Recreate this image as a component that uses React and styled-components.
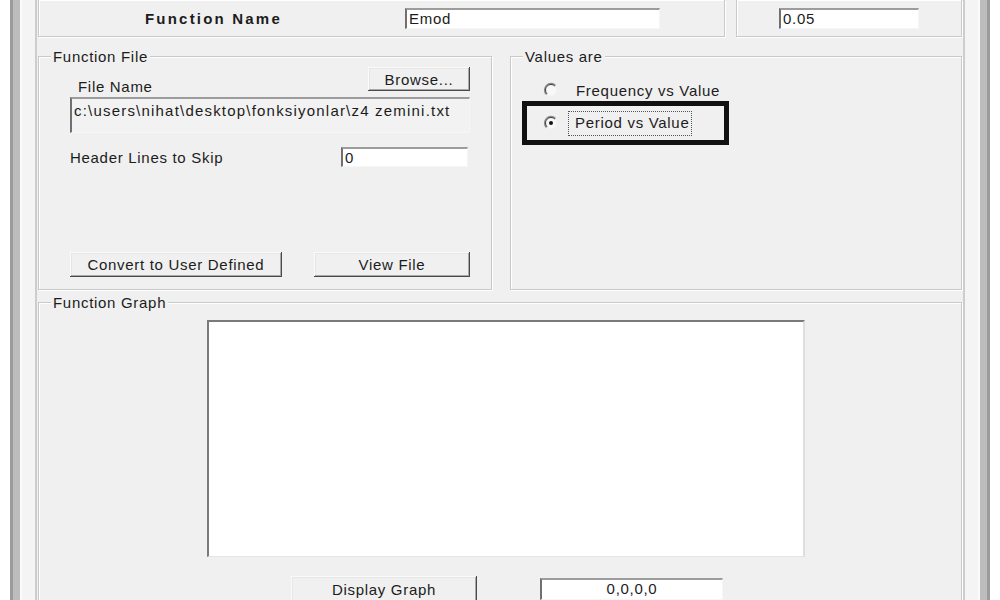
import React from "react";
import styled, { createGlobalStyle } from "styled-components";

const GlobalStyle = createGlobalStyle`
  html, body {
    margin: 0;
    padding: 0;
    background: #fff;
  }
  body {
    font-family: "Liberation Sans", Arial, sans-serif;
    font-size: 15px;
    letter-spacing: 0.7px;
    color: #1c1c1c;
  }
  * {
    box-sizing: border-box;
  }
`;

// window chrome: dark outer edge, grey rim, light inner strip
const Frame = styled.div`
  height: 600px;
  margin: 0 10px;
  border-left: 3px solid #9b9b9b;
  border-right: 3px solid #9b9b9b;
  overflow: hidden;
`;

const Rim = styled.div`
  height: 100%;
  border-left: 7px solid #bdbdbd;
  border-right: 7px solid #bdbdbd;
  background: #f4f4f4;
  box-shadow: inset 2px 0 #fbfbfb, inset -2px 0 #fbfbfb;
  padding: 0 15px;
`;

const Client = styled.div`
  height: 100%;
  border-left: 2px solid #cdcdcd;
  border-right: 2px solid #cdcdcd;
  padding: 0 1px;
  background: #f0f0f0;
  display: flex;
  flex-direction: column;
`;

const Group = styled.div`
  position: relative;
  border: 1px solid #c9c9c9;
  box-shadow: inset 1px 1px #fff, 1px 1px #fff;
  border-top: ${(p) => (p.$open ? "none" : "1px solid #c9c9c9")};
`;

const GroupTitle = styled.span`
  position: absolute;
  top: -9px;
  left: 12px;
  padding: 0 2px;
  line-height: 17px;
  background: #f0f0f0;
  white-space: nowrap;
`;

const TopRow = styled.div`
  display: flex;
  gap: 11px;
  height: 37px;
  flex-shrink: 0;
`;

const NameBox = styled(Group)`
  width: 687px;
  display: flex;
  align-items: center;
  padding-left: 106px;
`;

const DampBox = styled(Group)`
  flex: 1;
  display: flex;
  align-items: center;
  padding-left: 42px;
`;

const BoldLabel = styled.span`
  width: 260px;
  font-weight: 700;
  letter-spacing: 2.2px;
`;

const Field = styled.div`
  width: ${(p) => p.$w}px;
  height: ${(p) => p.$h || 21}px;
  background: ${(p) => (p.$flat ? "#f2f2f2" : "#fff")};
  border-top: 2px solid #9c9c9c;
  border-left: 2px solid #707070;
  border-right: 1px solid #f6f6f6;
  border-bottom: 1px solid #f6f6f6;
  padding: ${(p) => (p.$flat ? "3px 2px" : "0 2px")};
  line-height: ${(p) => (p.$flat ? "17px" : "18px")};
  text-align: ${(p) => (p.$center ? "center" : "left")};
  white-space: nowrap;
  overflow: hidden;
`;

const Button = styled.button`
  width: ${(p) => p.$w}px;
  height: ${(p) => p.$h || 25}px;
  padding: 0;
  border: none;
  background: #f0f0f0;
  font: inherit;
  letter-spacing: inherit;
  color: inherit;
  box-shadow: inset -1px -1px #4a4a4a, inset 1px 1px #fafafa,
    inset -2px -2px #a9a9a9, inset 2px 2px #e6e6e6;
`;

const MidRow = styled.div`
  display: flex;
  gap: 18px;
  height: 234px;
  margin-top: 19px;
  flex-shrink: 0;
`;

const FileGroup = styled(Group)`
  width: 454px;
  display: flex;
  flex-direction: column;
  padding: 10px 21px 12px 31px;
`;

const BrowseRow = styled.div`
  display: flex;
  justify-content: space-between;
  height: 24px;
`;

const Label = styled.span`
  line-height: 17px;
  margin-top: ${(p) => p.$top || 0}px;
  margin-left: ${(p) => p.$left || 0}px;
  width: ${(p) => (p.$w ? `${p.$w}px` : "auto")};
  white-space: nowrap;
`;

const PathBox = styled(Field)`
  margin-top: 6px;
  letter-spacing: 1.2px;
`;

const SkipRow = styled.div`
  display: flex;
  align-items: center;
  margin-top: 14px;
`;

const ButtonRow = styled.div`
  display: flex;
  gap: 32px;
  margin-top: auto;
`;

const ValuesGroup = styled(Group)`
  flex: 1;
  padding-top: 23px;
`;

const RadioRow = styled.div`
  display: flex;
  align-items: center;
  height: 20px;
  margin-left: 32px;
  gap: 17px;
`;

const Highlight = styled.div`
  width: 207px;
  height: 44px;
  margin: 1px 0 0 11px;
  border: 5px solid #111;
  display: flex;
  align-items: center;
  gap: 9px;
  padding-left: 16px;
`;

const Focus = styled.span`
  height: 25px;
  line-height: 22px;
  padding: 0 2px 0 6px;
  border: 1px dotted #555;
`;

const GraphGroup = styled(Group)`
  flex: 1;
  margin-top: 12px;
  border-bottom: none;
  padding: 17px 0 0 168px;
`;

const GraphArea = styled.div`
  width: 598px;
  height: 237px;
  background: #fff;
  border-top: 2px solid #7a7a7a;
  border-left: 2px solid #7a7a7a;
  border-right: 2px solid #dedede;
  border-bottom: 1px solid #e4e4e4;
`;

const GraphControls = styled.div`
  display: flex;
  align-items: flex-start;
  gap: 63px;
  margin-top: 19px;
  padding-left: 84px;
`;

const Readout = styled(Field)`
  margin-top: 2px;
`;

const Radio = ({ checked }) => (
  <svg width="16" height="16" viewBox="0 0 16 16">
    <circle cx="8" cy="8" r="5.5" fill="#f8f8f8" />
    <path d="M12.6 3.4 A6.5 6.5 0 0 0 3.4 12.6" stroke="#8a8a8a" strokeWidth="1.3" fill="none" />
    <path d="M11.9 4.1 A5.5 5.5 0 0 0 4.1 11.9" stroke="#3c3c3c" strokeWidth="1" fill="none" />
    {checked && <circle cx="8" cy="8" r="2" fill="#151515" />}
  </svg>
);

export default function App() {
  return (
    <>
      <GlobalStyle />
      <Frame>
        <Rim>
          <Client>
            <TopRow>
              <NameBox $open>
                <BoldLabel>Function Name</BoldLabel>
                <Field $w={255}>Emod</Field>
              </NameBox>
              <DampBox $open>
                <Field $w={140}>0.05</Field>
              </DampBox>
            </TopRow>

            <MidRow>
              <FileGroup>
                <GroupTitle>Function File</GroupTitle>
                <BrowseRow>
                  <Label $left={8} $top={11}>File Name</Label>
                  <Button $w={102} $h={24}>Browse...</Button>
                </BrowseRow>
                <PathBox $w={400} $h={36} $flat>
                  c:\users\nihat\desktop\fonksiyonlar\z4 zemini.txt
                </PathBox>
                <SkipRow>
                  <Label $w={271}>Header Lines to Skip</Label>
                  <Field $w={127} $h={20}>0</Field>
                </SkipRow>
                <ButtonRow>
                  <Button $w={213}>Convert to User Defined</Button>
                  <Button $w={157}>View File</Button>
                </ButtonRow>
              </FileGroup>

              <ValuesGroup>
                <GroupTitle>Values are</GroupTitle>
                <RadioRow>
                  <Radio />
                  <Label>Frequency vs Value</Label>
                </RadioRow>
                <Highlight>
                  <Radio checked />
                  <Focus>Period vs Value</Focus>
                </Highlight>
              </ValuesGroup>
            </MidRow>

            <GraphGroup>
              <GroupTitle>Function Graph</GroupTitle>
              <GraphArea />
              <GraphControls>
                <Button $w={186} $h={26}>Display Graph</Button>
                <Readout $w={183} $h={22} $center>0,0,0,0</Readout>
              </GraphControls>
            </GraphGroup>
          </Client>
        </Rim>
      </Frame>
    </>
  );
}
